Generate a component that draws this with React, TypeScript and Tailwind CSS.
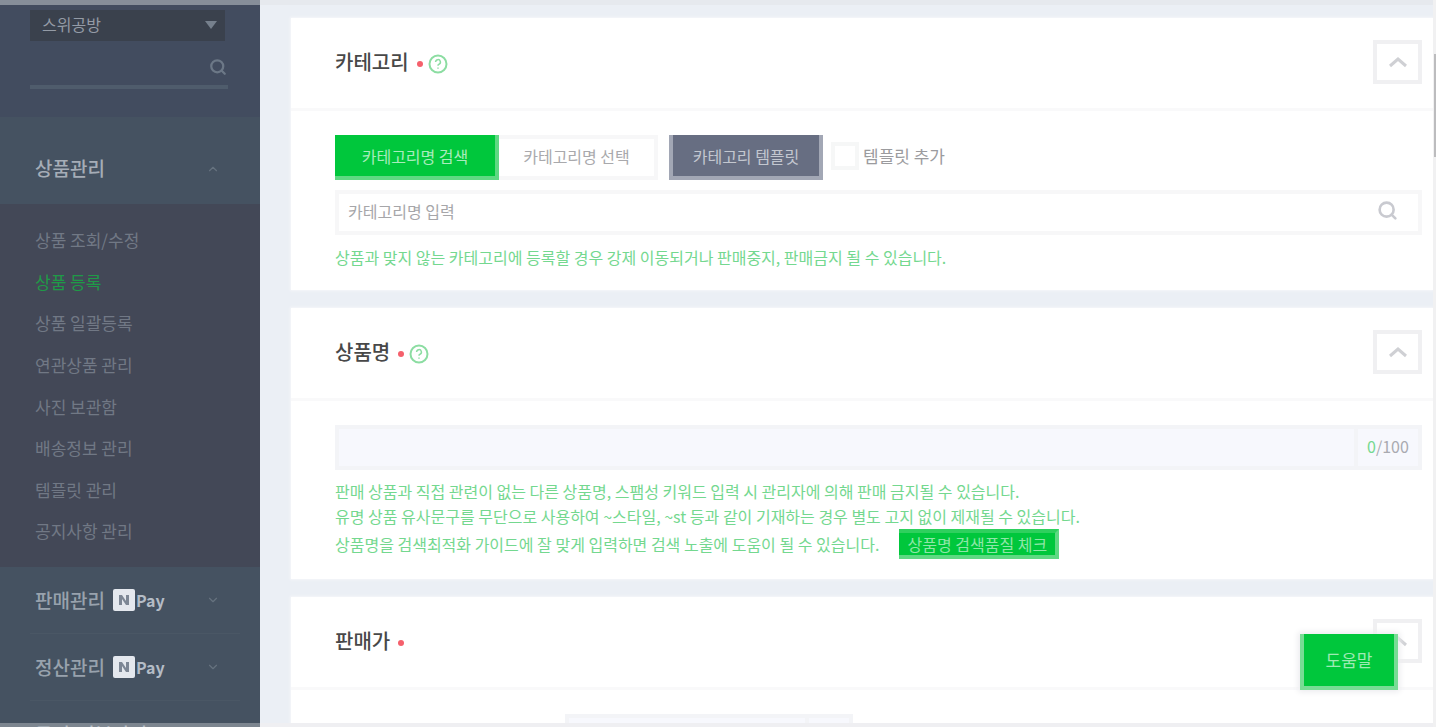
import { ReactNode, useState } from "react";
import { FiChevronDown, FiChevronUp, FiSearch } from "react-icons/fi";

const PRODUCT_MENU = [
  "상품 조회/수정",
  "상품 등록",
  "상품 일괄등록",
  "연관상품 관리",
  "사진 보관함",
  "배송정보 관리",
  "템플릿 관리",
  "공지사항 관리",
];

const MENU_GROUPS = [
  { title: "판매관리", pay: true },
  { title: "정산관리", pay: true },
  { title: "문의/리뷰관리", pay: false },
];

const NPay = () => (
  <span className="flex items-center text-base font-bold text-[#b4bcc6]">
    <svg viewBox="0 0 22 22" className="w-[22px] h-[22px] mr-px" aria-hidden="true">
      <rect width="22" height="22" rx="2" fill="#e4e8ee" />
      <path d="M6 16V6h3l4 6V6h3v10h-3l-4-6v6z" fill="#7d8795" />
    </svg>
    Pay
  </span>
);

const Sidebar = () => (
  <aside className="relative flex flex-col w-[260px] shrink-0 overflow-hidden border-t-[5px] border-[#868e99] bg-[#455261]">
    <div className="h-28 shrink-0 bg-[#424c5f] pt-[5px] pl-[30px] pr-8">
      <div className="relative">
        <select
          aria-label="스토어 선택"
          className="w-[195px] h-[31px] appearance-none bg-[#3a414d] pl-3 pb-1 text-base leading-5 text-[#949ba6]"
        >
          <option>스위공방</option>
        </select>
        <svg viewBox="0 0 12 8" className="absolute right-[11px] top-[11px] w-3 h-2" aria-hidden="true">
          <path d="M0 0h12L6 8z" fill="#76808d" />
        </svg>
      </div>

      <div className="flex items-center h-12 pt-2 border-b-4 border-[#4f5c6c]">
        <input aria-label="메뉴 검색" className="flex-1 min-w-0 bg-transparent text-base text-[#949ba6] outline-none" />
        <FiSearch className="mr-px text-[18px] text-[#6c7887]" strokeWidth={3} />
      </div>
    </div>

    <nav className="shrink-0">
      <button className="flex items-center justify-between w-full h-[87px] pl-[35px] pr-10 pt-4 text-[19px] font-medium text-[#a5adb7]">
        상품관리
        <FiChevronUp className="text-sm text-[#66727f]" />
      </button>

      <ul className="flex flex-col h-[363px] py-[15px] bg-[#434857]">
        {PRODUCT_MENU.map((item) => (
          <li key={item} className="flex items-center flex-1 pl-[35px]">
            <a
              href="#"
              className={item === "상품 등록" ? "text-[17px] text-[#1f9a47]" : "text-[17px] text-[#717885]"}
            >
              {item}
            </a>
          </li>
        ))}
      </ul>

      {MENU_GROUPS.map((group) => (
        <div key={group.title} className="pl-[30px] pr-5">
          <button className="flex items-center w-full h-[67px] gap-2 pl-[5px] pr-5 border-b border-[#4a5765] text-[19px] font-medium text-[#98a2ad]">
            {group.title}
            {group.pay && <NPay />}
            <FiChevronDown className="ml-auto text-sm text-[#66727f]" />
          </button>
        </div>
      ))}
    </nav>

    <div className="absolute inset-x-0 bottom-0 h-1 bg-white/30" />
  </aside>
);

type CardProps = {
  title: string;
  help?: boolean;
  children: ReactNode;
};

const Card = ({ title, help, children }: CardProps) => {
  const [open, setOpen] = useState(true);

  return (
    <section className="shrink-0 bg-white shadow-[0_0_2px_1px_#f5f6f9]">
      <header className="flex items-start justify-between h-[93px] pt-[22px] pl-11 pr-[11px] border-b-3 border-[#f9f9fa]">
        <div className="flex items-center h-11">
          <h2 className="text-xl font-medium text-[#484848]">{title}</h2>
          <span className="w-[6px] h-[6px] mt-1 ml-2 rounded-full bg-[#f5606c]" />
          {help && (
            <button aria-label={`${title} 도움말`} className="ml-[5px] mt-1">
              <svg viewBox="0 0 20 20" className="w-5 h-5" fill="none" stroke="#8cdda2" strokeWidth="2">
                <circle cx="10" cy="10" r="8.5" />
                <path d="M7.6 8a2.4 2.4 0 1 1 3.4 2.2c-.7.3-1 .7-1 1.5" strokeWidth="1.5" />
                <path d="M10 13.4v1.4" strokeWidth="1.5" />
              </svg>
            </button>
          )}
        </div>

        <button
          aria-label={`${title} 접기`}
          aria-expanded={open}
          onClick={() => setOpen(!open)}
          className="flex items-center justify-center w-[49px] h-11 border-4 border-[#f0f0f2]"
        >
          <svg viewBox="0 0 20 12" className="w-5 h-3" fill="none" stroke="#cfd0d4" strokeWidth="3" aria-hidden="true">
            <path d={open ? "M2 10l8-7 8 7" : "M2 2l8 7 8-7"} />
          </svg>
        </button>
      </header>

      {open && <div className="pt-6 pb-5 pl-11 pr-[11px]">{children}</div>}
    </section>
  );
};

const CategoryCard = () => (
  <Card title="카테고리" help>
    <div className="flex items-center text-base">
      <button className="w-[164px] h-[45px] bg-[#00c73c] border-r-4 border-b-4 border-[#5fd983] text-[#a9ecbd]">
        카테고리명 검색
      </button>
      <button className="w-[159px] h-[45px] pb-1 border-4 border-l-0 border-[#f7f7f8] text-[#a9a9ac]">
        카테고리명 선택
      </button>
      <button className="w-[154px] h-[45px] ml-[11px] bg-[#676e82] border-4 border-t-0 border-[#a2a7b5] text-[#c3c7d0]">
        카테고리 템플릿
      </button>
      <label className="flex items-center gap-1 ml-2 pb-1 text-[17px] text-[#9b9b9e]">
        <input type="checkbox" className="w-7 h-7 appearance-none border-4 border-[#f6f7f7] checked:bg-[#00c73c]" />
        템플릿 추가
      </label>
    </div>

    <div className="flex items-center h-[45px] mt-[10px] pb-1 pl-[9px] pr-5 border-4 border-[#f7f7f8]">
      <input
        aria-label="카테고리명 입력"
        placeholder="카테고리명 입력"
        className="flex-1 min-w-0 text-base text-[#6b6b6e] placeholder:text-[#a6a6a9] outline-none"
      />
      <button aria-label="카테고리 검색">
        <FiSearch className="text-[21px] text-[#c9cad0]" strokeWidth={3} />
      </button>
    </div>

    <p className="mt-[10px] text-base leading-[25px] text-[#74d88f]">
      상품과 맞지 않는 카테고리에 등록할 경우 강제 이동되거나 판매중지, 판매금지 될 수 있습니다.
    </p>
  </Card>
);

const NameCard = () => (
  <Card title="상품명" help>
    <div className="flex h-[45px] border-4 border-[#f3f4f7] bg-[#f7f8fd]">
      <input aria-label="상품명" className="flex-1 min-w-0 px-2 bg-transparent text-base outline-none" />
      <span className="flex items-center w-16 pl-[9px] pb-1 border-l-4 border-[#f3f4f7] text-base text-[#a9aab0]">
        <span className="text-[#74d88f]">0</span>/100
      </span>
    </div>

    <div className="mt-[9px] text-base leading-[25px] text-[#74d88f]">
      <p>
        판매 상품과 직접 관련이 없는 다른 상품명, 스팸성 키워드 입력 시 관리자에 의해 판매 금지될 수 있습니다.
      </p>
      <p>
        유명 상품 유사문구를 무단으로 사용하여 ~스타일, ~st 등과 같이 기재하는 경우 별도 고지 없이 제재될 수 있습니다.
      </p>
      <div className="flex items-center gap-5">
        <p>상품명을 검색최적화 가이드에 잘 맞게 입력하면 검색 노출에 도움이 될 수 있습니다.</p>
        <button className="w-40 h-[30px] border-y-4 border-r-4 border-t-[#2fd05e] border-r-[#5fd983] border-b-[#5fd983] bg-[#00c73c] text-base leading-5 text-[#8fe6a8]">
          상품명 검색품질 체크
        </button>
      </div>
    </div>
  </Card>
);

const PriceCard = () => (
  <Card title="판매가">
    <div className="flex w-72 h-[45px] ml-[230px] border-4 border-[#f3f4f7] bg-[#f7f8fd]">
      <input aria-label="판매가" className="flex-1 min-w-0 px-2 bg-transparent text-base outline-none" />
      <span className="w-11 border-l-4 border-[#f3f4f7]" />
    </div>
  </Card>
);

export default function App() {
  return (
    <div className="relative flex h-screen overflow-hidden bg-[#ebeff5] font-['Noto_Sans_CJK_KR',sans-serif]">
      <Sidebar />

      <main className="flex flex-col flex-1 min-w-0 gap-[18px] overflow-hidden border-t-[5px] border-b-4 border-t-[#e6e9ee] border-b-[#efeff2] pt-[13px] pl-[31px]">
        <CategoryCard />
        <NameCard />
        <PriceCard />
      </main>

      <div className="w-[3px] shrink-0 pt-[54px] pl-px bg-[#f1f1f2]">
        <div className="h-[103px] bg-[#bcbcbe]" />
      </div>

      <button className="absolute right-[38px] bottom-[37px] w-[98px] h-14 border-4 border-t-0 border-[#78dc95] bg-[#00c73c] text-[17px] text-[#9eeab4] shadow-[0_0_6px_2px_#ececef]">
        도움말
      </button>
    </div>
  );
}
